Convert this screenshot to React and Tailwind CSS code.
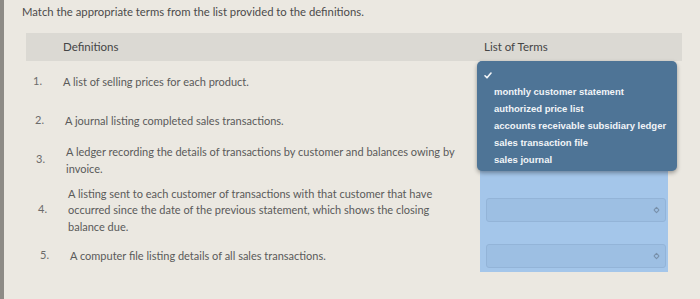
import { ChevronUp, ChevronDown } from 'lucide-react';

const rows = [
  { n: '1.', text: 'A list of selling prices for each product.', h: 'h-[40px]', shift: 'pl-[7px]' },
  { n: '2.', text: 'A journal listing completed sales transactions.', h: 'h-[38px]', shift: 'pl-[9px]' },
  { n: '3.', text: 'A ledger recording the details of transactions by customer and balances owing by invoice.', h: 'h-[41px]', shift: 'pl-[10px]' },
  { n: '4.', text: 'A listing sent to each customer of transactions with that customer that have occurred since the date of the previous statement, which shows the closing balance due.', h: 'h-[59px]', shift: 'pl-[12px]' },
  { n: '5.', text: 'A computer file listing details of all sales transactions.', h: 'h-[33px]', shift: 'pl-[14px]' },
];

const terms = [
  'monthly customer statement',
  'authorized price list',
  'accounts receivable subsidiary ledger',
  'sales transaction file',
  'sales journal',
];

function SelectBox() {
  return (
    <div className="ml-[6px] mr-[2px] h-[24px] rounded-[3px] border border-[#93b4d8] bg-[#9dbfe3] flex items-center justify-end pr-[4px]">
      <div className="flex flex-col items-center text-[#7890aa] -space-y-[6px]">
        <ChevronUp size={9} strokeWidth={3} />
        <ChevronDown size={9} strokeWidth={3} />
      </div>
    </div>
  );
}

function TermsMenu() {
  return (
    <div className="absolute left-[1px] top-0 z-10 w-[200px] h-[110px] rounded-[5px] bg-[#4e7496] shadow-[0_2px_4px_rgba(0,0,0,0.35)] pt-[6px] font-['Liberation_Sans',Arial,sans-serif] text-[9.5px] font-bold text-white">
      <div className="h-[16px] pl-[7px] flex items-center">
        <svg width="8" height="7" viewBox="0 0 8 7" fill="none" stroke="#f4f6f8" strokeWidth="1.6" strokeLinecap="round" strokeLinejoin="round">
          <path d="M1 3.8 L3 5.8 L7 1" />
        </svg>
      </div>
      {terms.map(t => (
        <div key={t} className="h-[17px] pl-[17px] leading-[17px] text-[#f2f5f8]">{t}</div>
      ))}
    </div>
  );
}

export default function App() {
  return (
    <div className="w-[700px] h-[299px] overflow-hidden bg-[#ebe8e1] border-l-4 border-[#8d8b86] font-['Lato','Open_Sans',sans-serif]">
      {/* 題目 */}
      <div className="pl-[18px] pt-[4px] text-[11.3px] leading-[16px] text-[#4b4b4b]">
        Match the appropriate terms from the list provided to the definitions.
      </div>

      <div className="ml-[22px] mt-[13px] w-[656px]">
        {/* 表頭 */}
        <div className="h-[28px] bg-[#dbd9d3] flex items-center text-[11.5px] text-[#454545]">
          <div className="w-[450px] pl-[37px]">Definitions</div>
          <div className="pl-[8px]">List of Terms</div>
        </div>

        {/* 內容列 */}
        {rows.map((r, i) => (
          <div key={r.n} className={`flex ${r.h}`}>
            <div className={`w-[450px] flex items-center ${r.shift} text-[11px] leading-[16.5px] text-[#5a5a5a]`}>
              <div className="w-[30px] shrink-0 text-[11px] text-[#6b6b6b]">{r.n}</div>
              <div className="w-[392px] pt-[2px]">{r.text}</div>
            </div>
            <div className="pl-[4px] w-[196px] relative">
              <div className="h-full w-[188px] bg-[#a4c6ea] flex flex-col justify-center">
                {i >= 3 && <SelectBox />}
              </div>
              {i === 0 && <TermsMenu />}
            </div>
          </div>
        ))}
      </div>
    </div>
  );
}
